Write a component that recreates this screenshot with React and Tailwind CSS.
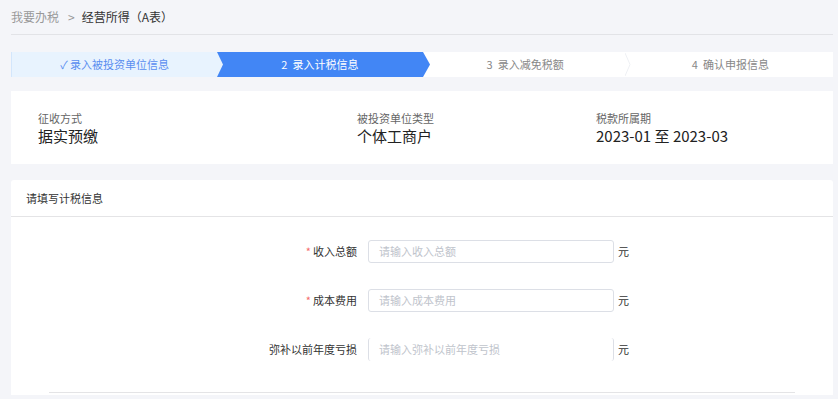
import React from 'react';

const FONT = { fontFamily: '"Noto Sans CJK SC", "Noto Sans", sans-serif' };

const steps = [
    { label: '✓ 录入被投资单位信息', state: 'done' },
    { label: '2  录入计税信息', state: 'active' },
    { label: '3  录入减免税额', state: 'todo' },
    { label: '4  确认申报信息', state: 'todo' },
];

const StepArrow = ({ state }) => {
    if (state === 'done') {
        return (
            <svg className="absolute top-0 -right-[6px] z-10" width="6" height="25" viewBox="0 0 6 25">
                <path d="M0 0 L6 12.5 L0 25 Z" fill="#e8f3fe" />
            </svg>
        );
    }
    if (state === 'active') {
        return (
            <svg className="absolute top-0 -right-[7px] z-10" width="7" height="25" viewBox="0 0 7 25">
                <path d="M0 0 L7 12.5 L0 25 Z" fill="#4286f5" />
            </svg>
        );
    }
    return (
        <svg className="absolute top-0 -right-[3px] z-10" width="6" height="25" viewBox="0 0 6 25">
            <path d="M0 1 L5 12.5 L0 24" fill="none" stroke="#eef0f4" strokeWidth="1" />
        </svg>
    );
};

const Field = ({ label, required, placeholder, open }) => (
    <div className="flex items-center h-[23px]">
        <div className="w-[357px] pr-[11px] text-right text-[11px] text-[#333]">
            {required && <span className="text-[#f56c6c] mr-[2px]">*</span>}
            {label}
        </div>
        <div
            className={
                open
                    ? 'w-[246px] h-[23px] border-x border-[#dcdfe6] rounded-[3px] px-[10px] flex items-center text-[11px] text-[#c0c4cc]'
                    : 'w-[246px] h-[23px] border border-[#dcdfe6] rounded-[3px] px-[10px] flex items-center text-[11px] text-[#c0c4cc]'
            }
        >
            {placeholder}
        </div>
        <span className="ml-[4px] text-[11px] text-[#333]">元</span>
    </div>
);

export default function App() {
    return (
        <div className="w-[838px] h-[399px] overflow-hidden bg-[#f4f5f9] pl-[11px] pr-[5px]" style={FONT}>
            {/* Breadcrumb */}
            <div className="h-[35px] flex items-center border-b border-[#e2e3e7] text-[12px]">
                <span className="text-[#999]">我要办税</span>
                <span className="text-[#999] ml-[9px] mr-[7px]">&gt;</span>
                <span className="text-[#333]">经营所得（A表）</span>
            </div>

            {/* Steps */}
            <div className="mt-[17px] flex h-[25px] text-[11px]">
                {steps.map((s, i) => (
                    <div
                        key={i}
                        className={
                            s.state === 'done'
                                ? 'relative flex-1 flex items-center justify-center bg-[#e8f3fe] text-[#5a8ef0] border-l border-[#d3e6fc]'
                                : s.state === 'active'
                                ? 'relative flex-1 flex items-center justify-center bg-[#4286f5] text-white'
                                : 'relative flex-1 flex items-center justify-center bg-white text-[#888]'
                        }
                    >
                        <span className="whitespace-pre">{s.label}</span>
                        {i < 3 && <StepArrow state={s.state} />}
                    </div>
                ))}
            </div>

            {/* Info card */}
            <div className="mt-[14px] h-[73px] bg-white flex items-center pl-[27px]">
                <div className="w-[319px]">
                    <div className="text-[11px] text-[#666] leading-[15px]">征收方式</div>
                    <div className="text-[15px] text-[#222] leading-[19px]">据实预缴</div>
                </div>
                <div className="w-[239px]">
                    <div className="text-[11px] text-[#666] leading-[15px]">被投资单位类型</div>
                    <div className="text-[15px] text-[#222] leading-[19px]">个体工商户</div>
                </div>
                <div>
                    <div className="text-[11px] text-[#666] leading-[15px]">税款所属期</div>
                    <div className="text-[15px] text-[#222] leading-[19px]">2023-01 至 2023-03</div>
                </div>
            </div>

            {/* Form card */}
            <div className="mt-[16px] h-[215px] bg-white rounded-t-[3px]">
                <div className="h-[37px] flex items-center pl-[15px] border-b border-[#e4e4e6] text-[11px] text-[#333]">
                    请填写计税信息
                </div>
                <div className="pt-[23px] flex flex-col gap-[26px]">
                    <Field label="收入总额" required placeholder="请输入收入总额" />
                    <Field label="成本费用" required placeholder="请输入成本费用" />
                    <Field label="弥补以前年度亏损" placeholder="请输入弥补以前年度亏损" open />
                </div>
                <div className="mt-[31px] ml-[38px] w-[746px] border-t border-[#e4e4e6]" />
            </div>
        </div>
    );
}
